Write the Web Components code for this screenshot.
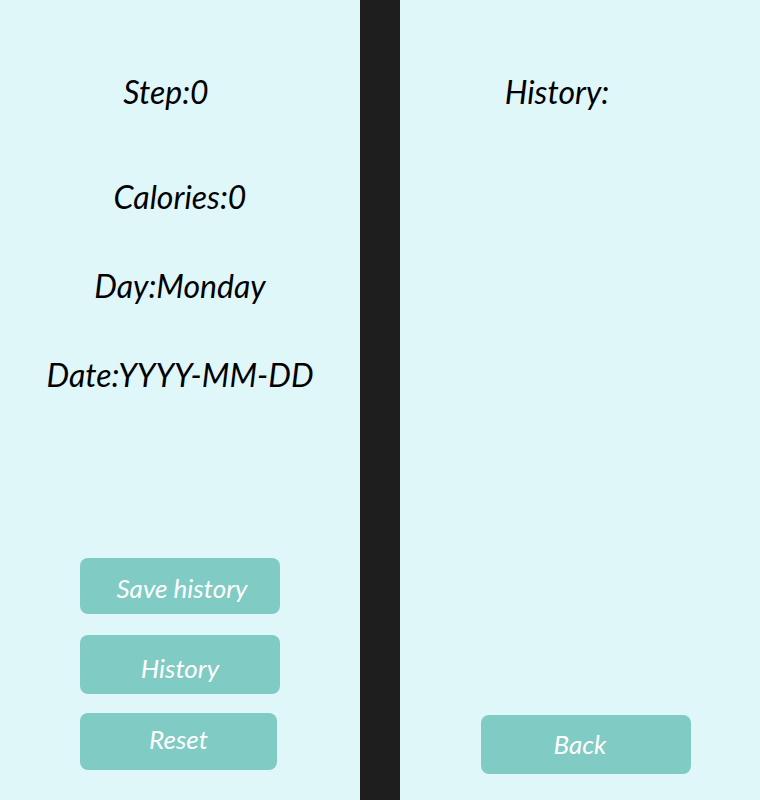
<!DOCTYPE html>
<html lang="en">
<head>
<meta charset="utf-8">
<title>Step counter</title>
<style>
  body { margin: 0; background: #1e1e1e; font-family: Lato, "Open Sans", sans-serif; }
</style>
</head>
<body>
<step-app></step-app>
<script>
class AppScreen extends HTMLElement {
  constructor() {
    super();
    this.attachShadow({ mode: 'open' }).innerHTML = `
      <style>
        :host { display: flex; flex-direction: column; box-sizing: border-box; background: #e0f7fa; min-height: 100vh; }
        .readings { display: flex; flex-direction: column; }
        .actions { display: flex; flex-direction: column; margin-top: auto; }
      </style>
      <div class="readings"><slot></slot></div>
      <div class="actions"><slot name="action"></slot></div>`;
  }
}
customElements.define('app-screen', AppScreen);

class StatLine extends HTMLElement {
  constructor() {
    super();
    this.attachShadow({ mode: 'open' }).innerHTML = `
      <style>
        :host { display: block; text-align: center; white-space: nowrap; color: #000; font-style: italic; font-size: 32px; line-height: 44px; }
      </style>
      <slot></slot>`;
  }
}
customElements.define('stat-line', StatLine);

class ActionButton extends HTMLElement {
  constructor() {
    super();
    this.attachShadow({ mode: 'open' }).innerHTML = `
      <style>
        :host { display: flex; }
        button { flex: 1; margin: 0; border: 0; border-radius: 8px; background: #80cbc4; color: #fff; font: inherit; font-style: italic; font-size: 26px; line-height: 32px; padding: var(--pad, 12px 0); cursor: pointer; white-space: nowrap; }
      </style>
      <button type="button"><slot></slot></button>`;
  }
}
customElements.define('action-button', ActionButton);

class StepApp extends HTMLElement {
  constructor() {
    super();
    this.attachShadow({ mode: 'open' }).innerHTML = `
      <style>
        :host { display: grid; grid-template-columns: 1fr 1fr; column-gap: 40px; min-height: 100vh; }
        .step { margin: 70px 28px 0 0; }
        .calories { margin-top: 61px; }
        .day { margin-top: 45px; }
        .date { margin-top: 45px; }
        .title { margin: 70px 46px 0 0; }
        .save { margin: 0 80px 21px; --pad: 14px 0 10px 4px; }
        .history { margin: 0 80px 19px; --pad: 17px 0 10px; }
        .reset { margin: 0 83px 30px 80px; --pad: 10px 0 15px; }
        .back { margin: 0 69px 26px 81px; --pad: 13px 12px 14px 0; }
      </style>
      <app-screen>
        <stat-line class="step">Step:0</stat-line>
        <stat-line class="calories">Calories:0</stat-line>
        <stat-line class="day">Day:Monday</stat-line>
        <stat-line class="date">Date:YYYY-MM-DD</stat-line>
        <action-button slot="action" class="save">Save history</action-button>
        <action-button slot="action" class="history">History</action-button>
        <action-button slot="action" class="reset">Reset</action-button>
      </app-screen>
      <app-screen>
        <stat-line class="title">History:</stat-line>
        <action-button slot="action" class="back">Back</action-button>
      </app-screen>`;
  }
}
customElements.define('step-app', StepApp);
</script>
</body>
</html>
